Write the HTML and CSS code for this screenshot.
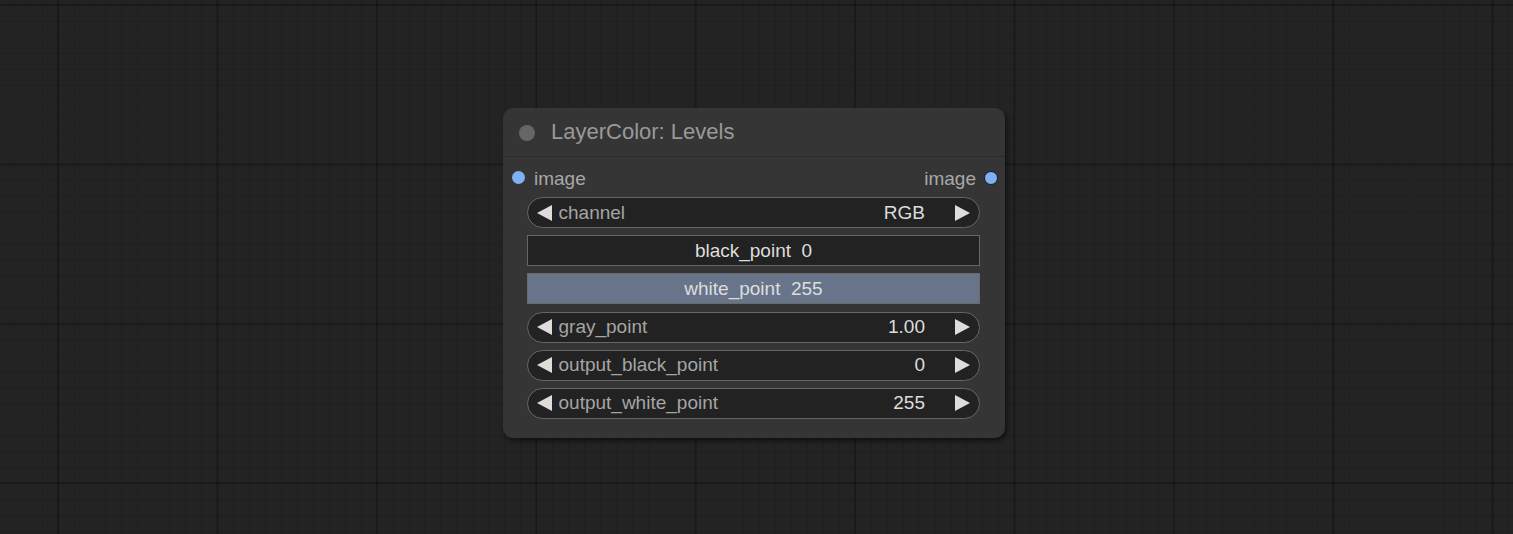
FILE: index.html
```html
<!DOCTYPE html>
<html lang="en">
<head>
<meta charset="utf-8">
<title>LayerColor: Levels</title>
<link rel="stylesheet" href="styles.css">
</head>
<body>
<div class="canvas">
  <div class="node">
    <div class="node-title">
      <span class="title-dot"></span>
      <span class="title-text">LayerColor: Levels</span>
    </div>
    <div class="node-body">
      <div class="slots">
        <div class="slot slot-in"><span class="slot-dot"></span><span class="slot-label">image</span></div>
        <div class="slot slot-out"><span class="slot-label">image</span><span class="slot-dot out"></span></div>
      </div>
      <div class="widgets">
        <div class="widget pill">
          <span class="arrow left"></span>
          <span class="w-label">channel</span>
          <span class="w-value">RGB</span>
          <span class="arrow right"></span>
        </div>
        <div class="widget slider">
          <span class="s-text">black_point&nbsp; 0</span>
        </div>
        <div class="widget slider active">
          <span class="s-text">white_point&nbsp; 255</span>
        </div>
        <div class="widget pill">
          <span class="arrow left"></span>
          <span class="w-label">gray_point</span>
          <span class="w-value">1.00</span>
          <span class="arrow right"></span>
        </div>
        <div class="widget pill">
          <span class="arrow left"></span>
          <span class="w-label">output_black_point</span>
          <span class="w-value">0</span>
          <span class="arrow right"></span>
        </div>
        <div class="widget pill">
          <span class="arrow left"></span>
          <span class="w-label">output_white_point</span>
          <span class="w-value">255</span>
          <span class="arrow right"></span>
        </div>
      </div>
    </div>
  </div>
</div>
</body>
</html>
```

FILE: styles.css
```css
html, body {
  margin: 0;
  padding: 0;
}

body {
  width: 1513px;
  height: 534px;
  overflow: hidden;
  font-family: "Liberation Sans", Arial, sans-serif;
  background-color: #232323;
  background-image:
    linear-gradient(to right, rgba(0, 0, 0, 0.22) 0 2px, transparent 2px),
    linear-gradient(to bottom, rgba(0, 0, 0, 0.22) 0 2px, transparent 2px),
    linear-gradient(to right, rgba(0, 0, 0, 0.11) 0 1px, transparent 1px),
    linear-gradient(to bottom, rgba(0, 0, 0, 0.11) 0 1px, transparent 1px);
  background-size: 159.4px 100%, 100% 159.4px, 15.94px 100%, 100% 15.94px;
  background-position: 57px 0, 0 4px, 58px 0, 0 5px;
}

.canvas {
  position: relative;
  width: 1513px;
  height: 534px;
}

.node {
  position: absolute;
  left: 503px;
  top: 108px;
  width: 502px;
  background: #353535;
  border-radius: 10px;
  box-shadow: 2px 3px 4px rgba(0, 0, 0, 0.5);
}

.node-title {
  height: 48px;
  display: flex;
  align-items: center;
  padding-left: 16px;
  border-bottom: 1px solid #2b2b2b;
}

.title-dot {
  width: 16px;
  height: 16px;
  border-radius: 50%;
  background: #666;
  margin-top: 1px;
}

.title-text {
  margin-left: 16px;
  font-size: 22px;
  color: #999;
}

.node-body {
  padding: 0 25px 19px 24px;
}

.slots {
  height: 40px;
  padding-top: 4px;
  box-sizing: border-box;
  display: flex;
  justify-content: space-between;
  align-items: center;
  margin-left: -15px;
  margin-right: -18px;
}

.slot {
  display: flex;
  align-items: center;
  font-size: 19px;
  color: #a8a8a8;
}

.slot-dot {
  width: 13px;
  height: 13px;
  border-radius: 50%;
  background: #7eb1f2;
  margin-top: -3px;
}

.slot-dot.out {
  width: 12px;
  height: 12px;
  border: 1.5px solid #141a22;
}

.slot-in .slot-label {
  margin-left: 9px;
}

.slot-out .slot-label {
  margin-right: 8px;
}

.widgets {
  display: flex;
  flex-direction: column;
  gap: 7.2px;
}

.widget {
  box-sizing: border-box;
  height: 31px;
  background: #222;
  border: 1.5px solid #666;
  display: flex;
  align-items: center;
  font-size: 19px;
}

.pill {
  border-radius: 16px;
  padding: 0 9px 0 8.5px;
}

.arrow {
  width: 0;
  height: 0;
  border-top: 8.5px solid transparent;
  border-bottom: 8.5px solid transparent;
}

.arrow.left {
  border-right: 15px solid #ddd;
}

.arrow.right {
  border-left: 15px solid #ddd;
}

.w-label {
  margin-left: 7px;
  color: #a5a5a5;
  flex: 1;
}

.w-value {
  color: #ddd;
  margin-right: 30px;
}

.slider {
  justify-content: center;
  border-color: #676767;
}

.slider.active {
  background: #68748a;
  border-color: #6a6a6a;
}

.s-text {
  color: #ddd;
}
```
